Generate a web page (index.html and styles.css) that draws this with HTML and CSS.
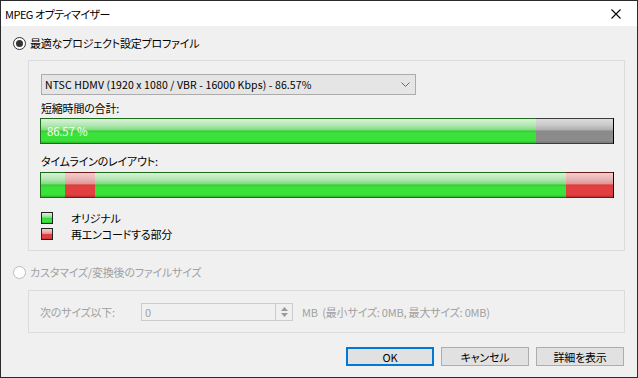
FILE: index.html
```html
<!DOCTYPE html>
<html lang="ja">
<head>
    <meta charset="UTF-8">
    <title>MPEG オプティマイザー</title>
    <link rel="stylesheet" href="styles.css">
</head>
<body>
    <div class="window">
        <div class="titlebar">
            <span class="title">MPEG オプティマイザー</span>
            <svg class="close" width="10" height="10" viewBox="0 0 10 10">
                <path d="M0.5 0.5 L9.5 9.5 M9.5 0.5 L0.5 9.5" stroke="#000" stroke-width="1.1" fill="none"/>
            </svg>
        </div>

        <div class="content">
            <div class="radio-row">
                <span class="radio checked"></span>
                <span>最適なプロジェクト設定プロファイル</span>
            </div>

            <div class="group group-profile">
                <div class="select">
                    <span>NTSC HDMV (1920 x 1080 / VBR - 16000 Kbps) - 86.57%</span>
                    <svg width="9" height="5" viewBox="0 0 9 5">
                        <path d="M0.5 0.5 L4.5 4.5 L8.5 0.5" stroke="#666" fill="none"/>
                    </svg>
                </div>

                <div class="field-label label-total">短縮時間の合計:</div>
                <div class="bar">
                    <div class="seg seg-green" style="width: 86.57%"><span class="bar-text">86.57 %</span></div>
                    <div class="seg seg-gray" style="width: 13.43%"></div>
                </div>

                <div class="field-label label-timeline">タイムラインのレイアウト:</div>
                <div class="bar bar-timeline">
                    <div class="seg seg-green" style="width: 4.2%"></div>
                    <div class="seg seg-red" style="width: 5.2%"></div>
                    <div class="seg seg-green" style="width: 82.3%"></div>
                    <div class="seg seg-red" style="width: 8.3%"></div>
                </div>

                <div class="legend">
                    <div class="legend-item"><span class="swatch seg-green"></span>オリジナル</div>
                    <div class="legend-item"><span class="swatch seg-red"></span>再エンコードする部分</div>
                </div>
            </div>

            <div class="radio-row radio-custom disabled">
                <span class="radio"></span>
                <span>カスタマイズ/変換後のファイルサイズ</span>
            </div>

            <div class="group group-size disabled">
                <span class="size-label">次のサイズ以下:</span>
                <div class="spin">
                    <span class="spin-input">0</span>
                    <span class="spin-buttons">
                        <svg width="7" height="4" viewBox="0 0 7 4"><path d="M0 4 L3.5 0 L7 4 Z" fill="#9a9a9a"/></svg>
                        <svg width="7" height="4" viewBox="0 0 7 4"><path d="M0 0 L3.5 4 L7 0 Z" fill="#9a9a9a"/></svg>
                    </span>
                </div>
                <span class="size-info">MB &nbsp;(最小サイズ: 0MB, 最大サイズ: 0MB)</span>
            </div>

            <div class="buttons">
                <button class="btn btn-default">OK</button>
                <button class="btn">キャンセル</button>
                <button class="btn">詳細を表示</button>
            </div>
        </div>
    </div>
</body>
</html>
```

FILE: styles.css
```css
* {
    margin: 0;
    padding: 0;
    box-sizing: border-box;
}

body {
    width: 638px;
    height: 378px;
    overflow: hidden;
    background-color: #2b2b2b;
    font-family: "Noto Sans CJK JP", "Noto Sans", sans-serif;
    font-size: 11px;
    letter-spacing: -0.2px;
    font-feature-settings: "palt";
    color: #000;
}

.window {
    width: 638px;
    height: 378px;
    border: 1px solid #2b2b2b;
    display: flex;
    flex-direction: column;
    background-color: #f0f0f0;
}

.titlebar {
    height: 25px;
    background-color: #fff;
    display: flex;
    align-items: center;
    justify-content: space-between;
    padding: 0 16px 0 4px;
}

.title {
    font-size: 11px;
    letter-spacing: -0.5px;
    line-height: 14px;
}

.content {
    flex: 1;
    display: flex;
    flex-direction: column;
    padding: 11px 13px 0 12px;
}

.radio-row {
    display: flex;
    align-items: center;
    height: 13px;
    gap: 4px;
    line-height: 13px;
}

.radio {
    width: 13px;
    height: 13px;
    border-radius: 50%;
    border: 1px solid #333;
    background-color: #fff;
    display: flex;
    align-items: center;
    justify-content: center;
}

.radio.checked::after {
    content: "";
    width: 7px;
    height: 7px;
    border-radius: 50%;
    background-color: #333;
}

.disabled {
    color: #a0a0a0;
}

.disabled .radio {
    border-color: #bcbcbc;
}

.group {
    margin-left: 15px;
    width: 597px;
    border: 1px solid #dcdcdc;
}

.group-profile {
    margin-top: 10px;
    height: 191px;
    padding: 13px 0 0 12px;
}

.select {
    width: 375px;
    height: 21px;
    border: 1px solid #acacac;
    background-color: #e5e5e5;
    display: flex;
    align-items: center;
    justify-content: space-between;
    padding: 0 5px 0 3px;
    font-size: 10.5px;
    letter-spacing: 0.1px;
}

.field-label {
    line-height: 14px;
}

.label-total {
    margin-top: 6px;
}

.label-timeline {
    margin-top: 10px;
}

.bar {
    display: flex;
    width: 574px;
    height: 26px;
    margin-left: -1px;
    margin-top: 3px;
    border-left: 1px solid #1c6a1c;
    border-right: 1px solid #000;
}

.bar-timeline {
    margin-top: 4px;
}

.seg {
    height: 100%;
    border-top: 1px solid;
    border-bottom: 1px solid;
    display: flex;
    align-items: center;
}

.seg-green {
    border-color: #1c6a1c;
    background: linear-gradient(to bottom, #d8f2d8 0%, #b4e8b4 25%, #80dc80 45%, #36cd36 50%, #3ae23a 60%, #3ae23a 90%, #2eb82e 100%);
}

.seg-gray {
    border-color: #3c3c3c;
    background: linear-gradient(to bottom, #dcdcdc 0%, #cacaca 25%, #b0b0b0 45%, #8a8a8a 50%, #8c8c8c 90%, #777 100%);
}

.seg-red {
    border-color: #6a1c1c;
    background: linear-gradient(to bottom, #f2cccc 0%, #ecb4b4 25%, #e49494 45%, #d83c3c 50%, #e24040 60%, #e24040 90%, #b83030 100%);
}

.bar-text {
    color: #f4fff4;
    padding-left: 6px;
    line-height: 14px;
    font-size: 11.5px;
}

.legend {
    margin-top: 14px;
    display: flex;
    flex-direction: column;
    gap: 4px;
}

.legend-item {
    display: flex;
    align-items: center;
    height: 12px;
    line-height: 12px;
}

.swatch {
    width: 12px;
    height: 12px;
    border: 1px solid #222;
    margin-right: 18px;
}

.radio-custom {
    margin-top: 15px;
}

.group-size {
    margin-top: 11px;
    height: 43px;
    padding: 12px 0 0 11px;
    display: flex;
    align-items: flex-start;
}

.size-label {
    line-height: 18px;
    width: 101px;
}

.spin {
    display: flex;
    height: 18px;
    width: 152px;
    border: 1px solid #cccccc;
    background-color: #f0f0f0;
}

.spin-input {
    flex: 1;
    padding-left: 3px;
    line-height: 16px;
}

.spin-buttons {
    width: 17px;
    border-left: 1px solid #cccccc;
    display: flex;
    flex-direction: column;
    justify-content: space-evenly;
    align-items: center;
}

.size-info {
    line-height: 18px;
    margin-left: 9px;
}

.buttons {
    margin-top: 14px;
    display: flex;
    justify-content: flex-end;
    gap: 7px;
}

.btn {
    width: 88px;
    height: 19px;
    border: 1px solid #adadad;
    background-color: #e1e1e1;
    font-family: "Noto Sans CJK JP", "Noto Sans", sans-serif;
    font-size: 11px;
    letter-spacing: -0.2px;
    font-feature-settings: "palt";
    color: #000;
    line-height: 14px;
}

.btn-default {
    border: 2px solid #0078d7;
}
```
